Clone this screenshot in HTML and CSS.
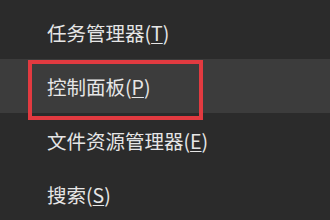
FILE: index.html
```html
<!DOCTYPE html>
<html lang="zh-CN">
<head>
<meta charset="utf-8">
<link rel="stylesheet" href="styles.css">
</head>
<body>
<ul class="menu">
  <li class="item">任务管理器(<u>T</u>)</li>
  <li class="item active">控制面板(<u>P</u>)<span class="mark"></span></li>
  <li class="item">文件资源管理器(<u>E</u>)</li>
  <li class="item">搜索(<u>S</u>)</li>
</ul>
</body>
</html>
```
FILE: styles.css
```css
html, body {
  margin: 0;
  padding: 0;
  background: #2b2b2b;
  width: 330px;
  height: 220px;
  overflow: hidden;
}
.menu {
  list-style: none;
  margin: 0;
  padding: 5px 0 0 0;
}
.item {
  position: relative;
  height: 54px;
  display: flex;
  align-items: center;
  padding-left: 47px;
  font-family: "Noto Sans CJK SC", "Noto Sans", sans-serif;
  font-size: 19.5px;
  color: #e6e6e6;
}
.item u {
  text-decoration-thickness: 1px;
  text-underline-offset: 2px;
}
.active {
  background: #3c3c3c;
}
.mark {
  position: absolute;
  left: 28px;
  top: 1px;
  width: 167px;
  height: 52px;
  border: 4px solid #e23a40;
}
```
